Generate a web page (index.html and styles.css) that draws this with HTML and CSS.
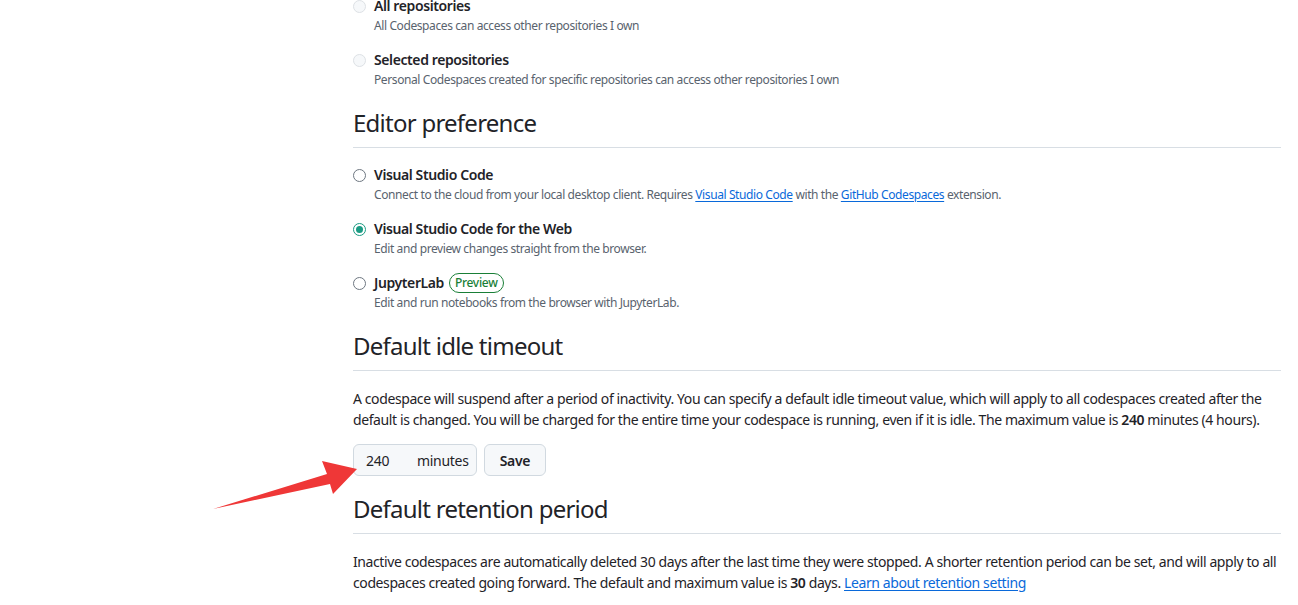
FILE: index.html
```html
<!DOCTYPE html>
<html lang="en">
<head>
<meta charset="utf-8">
<title>Codespaces settings</title>
<link rel="stylesheet" href="styles.css">
</head>
<body>
<main class="content">
  <div class="radio-group top-group">
    <div class="radio-item">
      <span class="radio disabled"></span>
      <div class="radio-text">
        <div class="r-title">All repositories</div>
        <div class="r-note">All Codespaces can access other repositories I own</div>
      </div>
    </div>
    <div class="radio-item">
      <span class="radio disabled"></span>
      <div class="radio-text">
        <div class="r-title">Selected repositories</div>
        <div class="r-note">Personal Codespaces created for specific repositories can access other repositories I own</div>
      </div>
    </div>
  </div>

  <h2 class="subhead">Editor preference</h2>
  <div class="radio-group">
    <div class="radio-item">
      <span class="radio"></span>
      <div class="radio-text">
        <div class="r-title">Visual Studio Code</div>
        <div class="r-note">Connect to the cloud from your local desktop client. Requires <a href="#">Visual Studio Code</a> with the <a href="#">GitHub Codespaces</a> extension.</div>
      </div>
    </div>
    <div class="radio-item">
      <span class="radio checked"></span>
      <div class="radio-text">
        <div class="r-title">Visual Studio Code for the Web</div>
        <div class="r-note">Edit and preview changes straight from the browser.</div>
      </div>
    </div>
    <div class="radio-item">
      <span class="radio"></span>
      <div class="radio-text">
        <div class="r-title">JupyterLab <span class="badge">Preview</span></div>
        <div class="r-note">Edit and run notebooks from the browser with JupyterLab.</div>
      </div>
    </div>
  </div>

  <h2 class="subhead">Default idle timeout</h2>
  <p class="para">A codespace will suspend after a period of inactivity. You can specify a default idle timeout value, which will apply to all codespaces created after the default is changed. You will be charged for the entire time your codespace is running, even if it is idle. The maximum value is <strong>240</strong> minutes (4 hours).</p>
  <div class="timeout-form">
    <div class="field"><span class="num">240</span><span class="unit">minutes</span></div>
    <button class="btn" type="button">Save</button>
  </div>

  <h2 class="subhead">Default retention period</h2>
  <p class="para">Inactive codespaces are automatically deleted 30 days after the last time they were stopped. A shorter retention period can be set, and will apply to all codespaces created going forward. The default and maximum value is <strong>30</strong> days. <a href="#">Learn about retention setting</a></p>
</main>

<svg class="arrow" width="1298" height="605" viewBox="0 0 1298 605" aria-hidden="true">
  <polygon points="213,509 327,474 322,461 357,469 333,494 330,484" fill="#ef3737"/>
</svg>
</body>
</html>
```

FILE: styles.css
```css
html, body {
  margin: 0;
  padding: 0;
  background: #ffffff;
}

body {
  position: relative;
  font-family: "Noto Sans", "Open Sans", sans-serif;
  color: #1f2328;
  overflow: hidden;
  height: 605px;
}

.content {
  width: 928px;
  margin-left: 353px;
  padding-top: 1px;
}

.top-group {
  margin-top: -5px;
}

.radio-group {
  display: flex;
  flex-direction: column;
  gap: 14px;
}

.radio-item {
  display: flex;
  align-items: flex-start;
  gap: 8px;
}

.radio {
  flex: none;
  box-sizing: border-box;
  width: 13px;
  height: 13px;
  margin-top: 4px;
  border-radius: 50%;
  border: 1px solid #6e7781;
  background: #ffffff;
  position: relative;
}

.radio.disabled {
  border-color: #dde1e5;
  background: #f6f8fa;
}

.radio.checked {
  border-color: #1b9b83;
}

.radio.checked::after {
  content: "";
  position: absolute;
  left: 2px;
  top: 2px;
  width: 7px;
  height: 7px;
  border-radius: 50%;
  background: #1b9b83;
}

.r-title {
  font-size: 14px;
  font-weight: 600;
  line-height: 20px;
  letter-spacing: -0.4px;
  display: flex;
  align-items: center;
  gap: 5px;
}

.r-note {
  font-size: 12px;
  line-height: 20px;
  letter-spacing: -0.4px;
  color: #59636e;
}

.r-note a,
.para a {
  color: #0969da;
  text-decoration: underline;
  text-underline-offset: 2px;
}

.badge {
  display: inline-flex;
  align-items: center;
  box-sizing: border-box;
  height: 20px;
  padding: 0 5px;
  border: 1px solid #1a7f37;
  border-radius: 10px;
  color: #1a7f37;
  font-size: 12px;
  font-weight: 500;
  line-height: 18px;
  letter-spacing: -0.3px;
}

.subhead {
  margin: 18px 0 17px;
  padding-bottom: 9px;
  border-bottom: 1px solid #d8dee4;
  font-size: 24px;
  font-weight: 400;
  line-height: 30px;
  letter-spacing: -0.75px;
}

.para {
  margin: 0 0 14px;
  font-size: 14px;
  line-height: 21px;
  letter-spacing: -0.4px;
}

.para strong {
  font-weight: 600;
}

.timeout-form {
  display: flex;
  gap: 7px;
  margin-bottom: 3px;
}

.field {
  box-sizing: border-box;
  width: 124px;
  height: 32px;
  padding: 0 0 0 12px;
  display: flex;
  align-items: center;
  background: #f6f8fa;
  border: 1px solid #d1d9e0;
  border-radius: 6px;
  font-size: 14px;
  letter-spacing: -0.3px;
  color: #1f2328;
}

.num {
  flex: none;
  width: 51px;
}

.unit {
  flex: none;
}

.btn {
  box-sizing: border-box;
  width: 62px;
  height: 32px;
  padding: 0;
  background: #f6f8fa;
  border: 1px solid #d1d9e0;
  border-radius: 6px;
  font-family: inherit;
  font-size: 14px;
  font-weight: 600;
  letter-spacing: -0.3px;
  color: #1f2328;
}

.arrow {
  position: absolute;
  left: 0;
  top: 0;
  pointer-events: none;
}
```
